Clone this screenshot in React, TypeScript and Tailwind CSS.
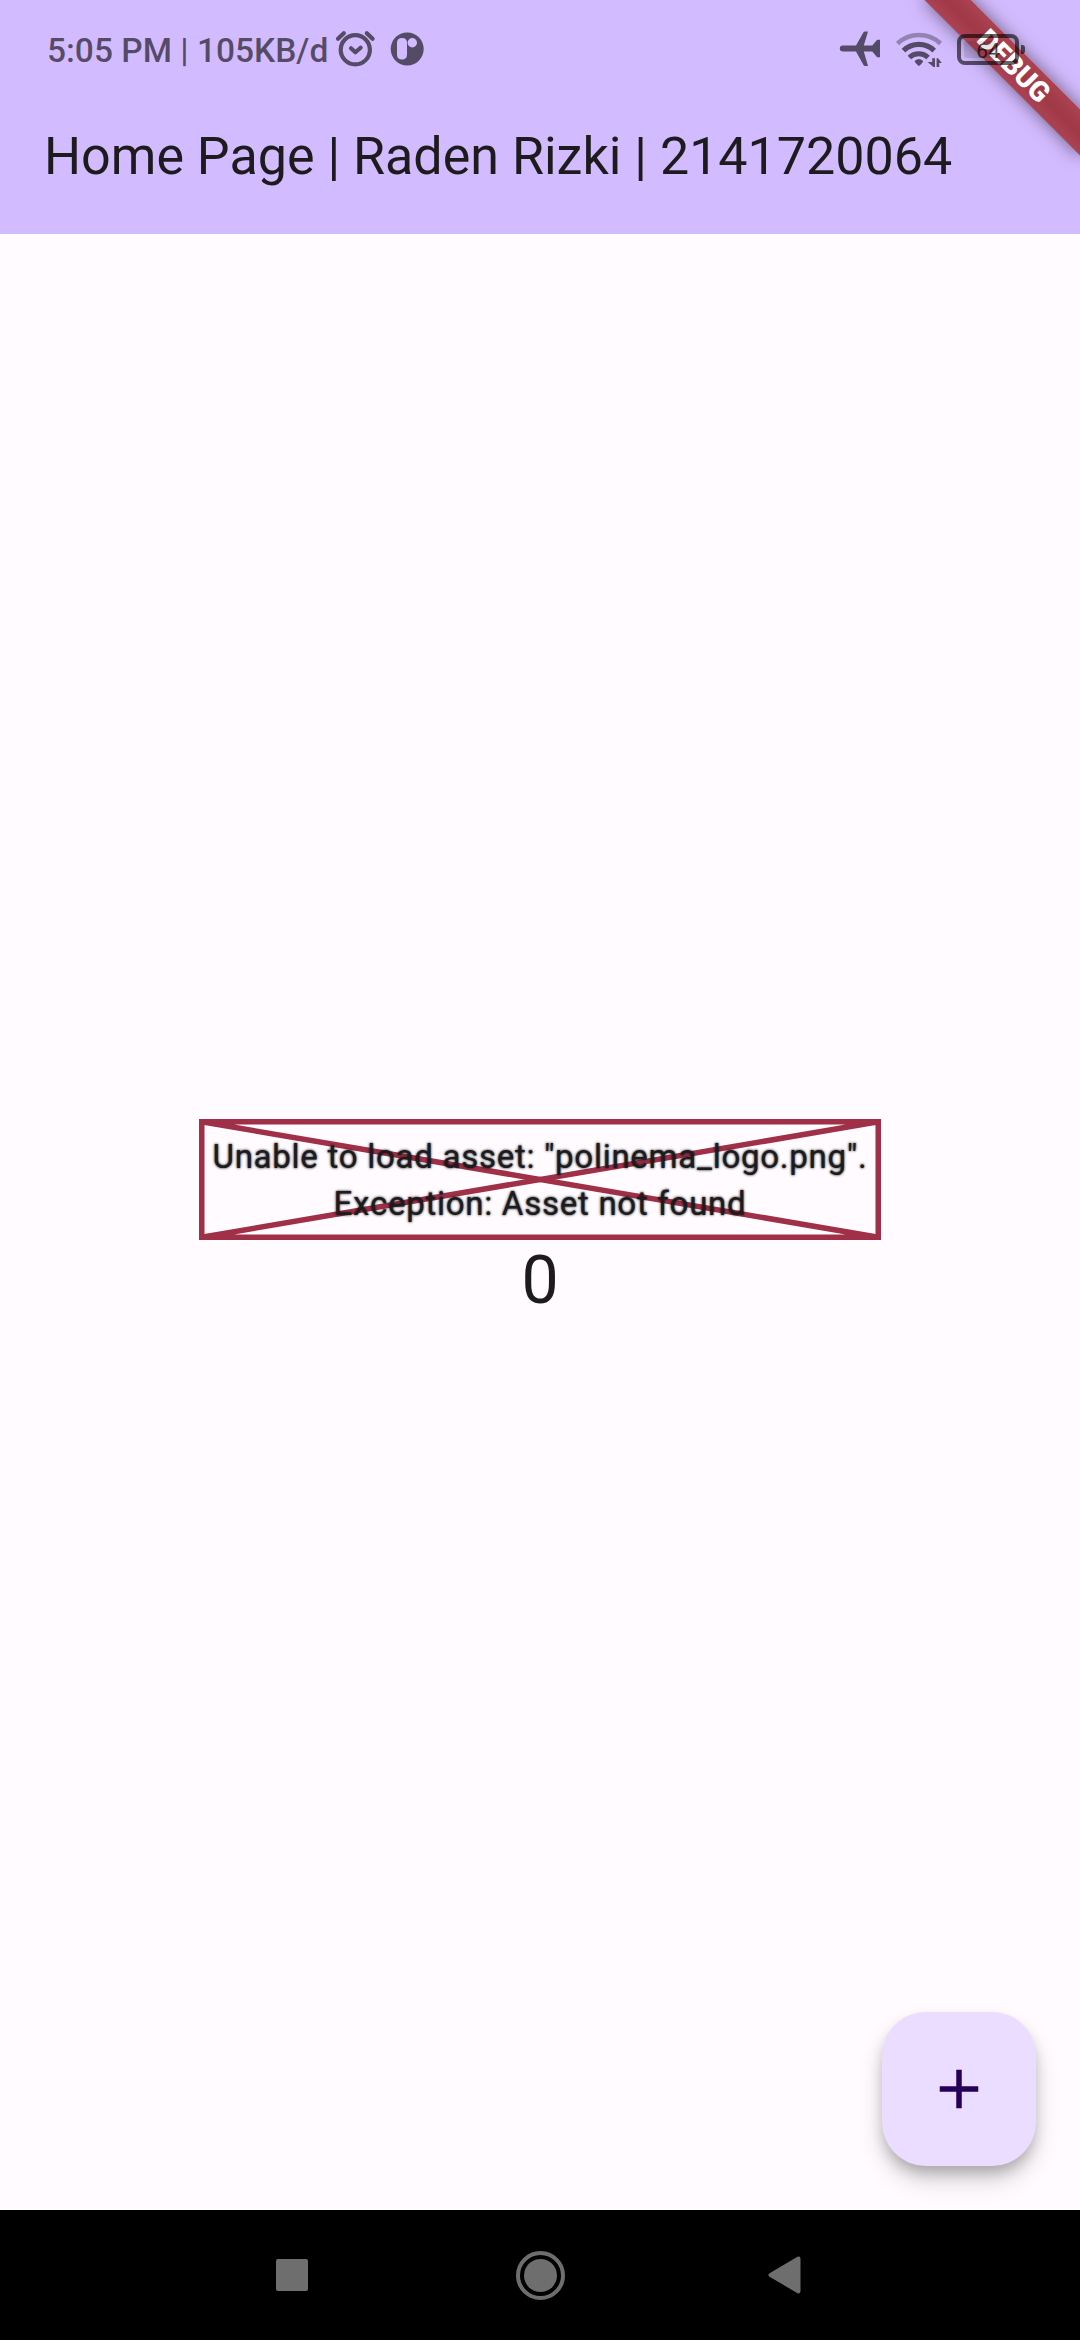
import React from "react";

function NotificationIcons() {
  return (
    <svg className="h-[50px] w-[120px]" viewBox="325 24 120 50" fill="none" stroke="currentColor" strokeLinecap="round" strokeLinejoin="round">
      <circle cx="355.3" cy="49.8" r="14.6" strokeWidth="4.2" />
      <path d="M338 38.8L343.8 33.2M372.6 38.8L366.8 33.2" strokeWidth="4.2" />
      <path d="M351 48.3L355.4 52.3L360.6 47.7" strokeWidth="4.2" />
      <path fillRule="evenodd" stroke="none" fill="currentColor" d="M407.2 32.5a16.5 16.5 0 1 1 0 33a16.5 16.5 0 0 1 0-33ZM402 38q-5 0-5 5v11.500q0 5 5 5q5 0 5-5v-11.500q0-5-5-5ZM412.300 38a4.700 4.700 0 1 0 0 9.400a4.700 4.700 0 0 0 0-9.400Z" />
    </svg>
  );
}

function ConnectionIcons() {
  return (
    <svg className="h-[50px] w-[110px]" viewBox="836 24 110 50" fill="none">
      <path fill="currentColor" d="M843 45.500h13l7.500-13.200q.5-.9 1.500-.9h3l-4.200 14.100h8.500l4.400-5.200q.5-.6 1.300-.6h2v17.600h-2q-.8 0-1.300-.6l-4.400-5.200h-8.500l4.200 14.500h-3q-1 0-1.500-.9l-7.500-13.600h-13q-3.200 0-3.200-3t3.200-3Z" />
      <g stroke="currentColor">
        <path strokeWidth="4.600" d="M897.500 43.500A31.500 31.500 0 0 1 940.500 43.500" strokeOpacity=".5" />
        <path strokeWidth="5.200" d="M903.500 50.700A22 22 0 0 1 934.200 50.700" />
        <path strokeWidth="5" d="M909.300 57.500A13.600 13.600 0 0 1 928.100 57.500" />
      </g>
      <path fill="currentColor" d="M914.800 61.800q-.3-.5.200-1q3.900-3.400 7.800 0q.5.500.2 1q-1.500 2.200-3.300 3.600q-.8.600-1.600 0q-1.800-1.400-3.300-3.600Z" />
      <path fill="currentColor" d="M932.200 58.300h2.800v8.700h-1.600l-5.800-5h4.600ZM936.600 67v-8.700h1.500l3.700 4.800h-2.600v3.900Z" />
    </svg>
  );
}

function Battery() {
  return (
    <div className="flex items-center">
      <div className="flex h-[31px] w-[62px] items-center justify-center rounded-[8px] border-4 border-black/60 p-[3px]">
        <div className="h-full w-full rounded-[2px] bg-linear-to-r from-black/10 from-64% to-transparent to-64% text-center text-[21px] leading-[21px] font-normal text-black/70">64</div>
      </div>
      <div className="ml-[2px] h-[9px] w-[4px] rounded-r-[3px] bg-black/60" />
    </div>
  );
}

export default function App() {
  return (
    <div className="relative flex h-[2340px] w-[1080px] flex-col overflow-hidden bg-[#fffbff] font-['Roboto',sans-serif]">
      <header className="relative h-[234px] bg-[#d3bbff] pt-[24px]">
        <div className="absolute top-[77px] left-[970px] h-[33px] w-[220px] origin-[110px_-77px] rotate-45 bg-linear-to-b from-[#aa4354] via-[#a03845] to-[#aa4354] text-center text-[28.050px] leading-[33px] font-black text-white shadow-[0_0_18px_rgba(0,0,0,0.5)]">
          DEBUG
        </div>
        <div className="relative flex h-[50px] pl-[47px] text-[33.500px] leading-[54px] font-medium text-black/60">
          <span className="w-[278px] whitespace-nowrap">5:05 PM | 105KB/d</span>
          <NotificationIcons />
          <div className="ml-[391px]"><ConnectionIcons /></div>
          <div className="mt-[9.500px] ml-[11px]"><Battery /></div>
        </div>
        <h1 className="mt-[49px] pl-[44px] text-[52.030px] leading-[68px] whitespace-nowrap text-[#1d1b1e]">Home Page | Raden Rizki | 2141720064</h1>
      </header>
      <main className="relative flex flex-1 flex-col items-center pt-[885px] text-[#1c1b1e]">
        <div className="relative h-[121px] w-[682px] pt-[14px] text-center text-[33.110px] leading-[47.300px] tracking-[0.69px]">
          <svg className="absolute inset-0 h-full w-full" viewBox="0 0 682 121" fill="none" stroke="#9f3048" strokeWidth="5.5"><path d="M2.750 2.750H679.250V118.250H2.750ZM2.750 2.750L679.250 118.250M679.250 2.750L2.750 118.250" /></svg>
          <p className="relative whitespace-nowrap [text-shadow:0_0_2.750px_#000]">Unable to load asset: "polinema_logo.png".<br />Exception: Asset not found</p>
        </div>
        <p className="-mt-[2px] text-[66.200px] leading-[85px]">0</p>
        <button className="absolute right-[44px] bottom-[44px] flex size-[154px] items-center justify-center rounded-[44px] bg-[#ebddff] shadow-[0_8px_14px_-2px_rgba(0,0,0,0.2),0_14px_26px_-2px_rgba(0,0,0,0.2)]">
          <svg className="size-[66px]" viewBox="0 0 24 24" fill="#250059"><path d="M19 13h-6v6h-2v-6H5v-2h6V5h2v6h6z" /></svg>
        </button>
      </main>
      <nav className="flex h-[130px] items-center bg-black pl-[276px] text-[#6e6e6e]">
        <div className="size-[32px] rounded-[2px] bg-current" />
        <div className="ml-[208px] flex size-[49px] items-center justify-center rounded-full border-4 border-current">
          <div className="size-[33px] rounded-full bg-current" />
        </div>
        <svg className="ml-[203px] h-[38px] w-[34px]" viewBox="0 0 34 38" fill="currentColor"><path d="M1.500 17.300L29.500 .8Q32.500-.2 32.500 3V35Q32.500 38.200 29.500 37.200L1.500 20.700Q-.7 19 1.500 17.300Z" /></svg>
      </nav>
    </div>
  );
}
